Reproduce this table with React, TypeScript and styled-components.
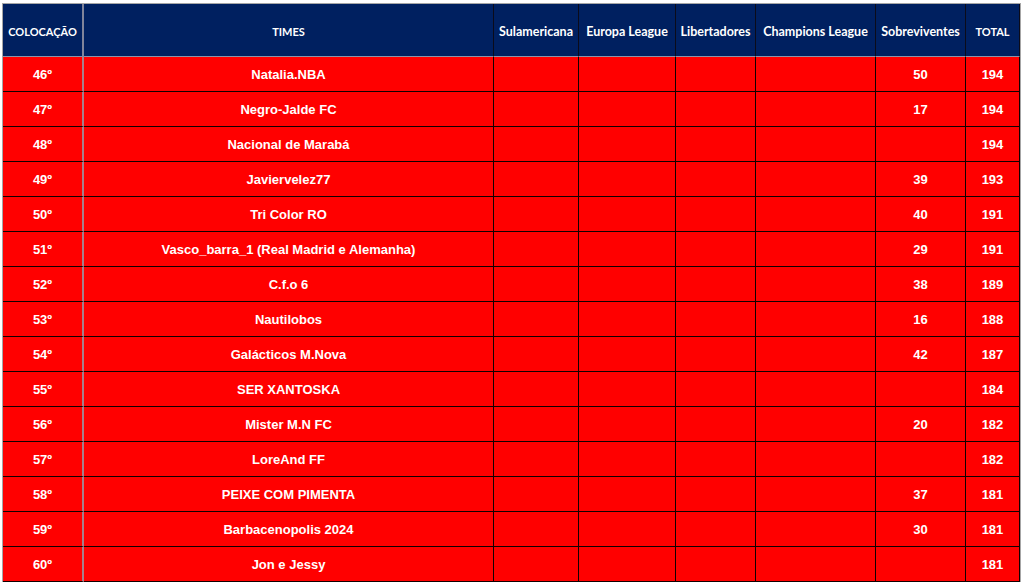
import React from 'react'
import styled, { createGlobalStyle } from 'styled-components'

const GlobalStyle = createGlobalStyle`
  html, body {
    margin: 0;
    padding: 0;
    background: #ffffff;
  }
`

const Sheet = styled.div`
  padding: 3px 0 0 2px;
  width: 1023px;
  height: 584px;
  box-sizing: border-box;
  overflow: hidden;
`

const Grid = styled.div`
  display: grid;
  grid-template-columns: 81px 410px 85px 97px 80px 120px 90px 54px;
  width: max-content;
  border-top: 1px solid #a6a6a6;
  border-left: 1px solid #a6a6a6;
  border-right: 1px solid #a6a6a6;
`

const HeadCell = styled.div<{ $grid?: boolean; $caps?: boolean }>`
  height: 53px;
  box-sizing: border-box;
  background: #002060;
  color: #ffffff;
  font-family: Lato, 'Open Sans', sans-serif;
  font-weight: 700;
  font-size: ${({ $caps }) => ($caps ? '11px' : '12.5px')};
  display: flex;
  align-items: center;
  justify-content: center;
  white-space: nowrap;
  padding-top: 2px;
  border-bottom: 1px solid #8c93a8;
  border-right: ${({ $grid }) => ($grid ? '2px solid rgba(150,150,165,0.85)' : '1px solid #0b0b1a')};
`

const Cell = styled.div<{ $grid?: boolean }>`
  height: 35px;
  box-sizing: border-box;
  background: #ff0000;
  color: #ffffff;
  font-family: 'Liberation Sans', Arial, sans-serif;
  font-weight: 700;
  font-size: 13px;
  display: flex;
  align-items: center;
  justify-content: center;
  white-space: nowrap;
  padding-top: 1px;
  border-bottom: 1px solid #120000;
  border-right: ${({ $grid }) => ($grid ? '2px solid rgba(150,150,165,0.85)' : '1px solid #120000')};
`

const columns = [
  'COLOCAÇÃO',
  'TIMES',
  'Sulamericana',
  'Europa League',
  'Libertadores',
  'Champions League',
  'Sobreviventes',
  'TOTAL',
]

type Row = { pos: number; team: string; sobr?: number; total: number }

const rows: Row[] = [
  { pos: 46, team: 'Natalia.NBA', sobr: 50, total: 194 },
  { pos: 47, team: 'Negro-Jalde FC', sobr: 17, total: 194 },
  { pos: 48, team: 'Nacional de Marabá', total: 194 },
  { pos: 49, team: 'Javiervelez77', sobr: 39, total: 193 },
  { pos: 50, team: 'Tri Color RO', sobr: 40, total: 191 },
  { pos: 51, team: 'Vasco_barra_1 (Real Madrid e Alemanha)', sobr: 29, total: 191 },
  { pos: 52, team: 'C.f.o 6', sobr: 38, total: 189 },
  { pos: 53, team: 'Nautilobos', sobr: 16, total: 188 },
  { pos: 54, team: 'Galácticos M.Nova', sobr: 42, total: 187 },
  { pos: 55, team: 'SER XANTOSKA', total: 184 },
  { pos: 56, team: 'Mister M.N FC', sobr: 20, total: 182 },
  { pos: 57, team: 'LoreAnd FF', total: 182 },
  { pos: 58, team: 'PEIXE COM PIMENTA', sobr: 37, total: 181 },
  { pos: 59, team: 'Barbacenopolis 2024', sobr: 30, total: 181 },
  { pos: 60, team: 'Jon e Jessy', total: 181 },
]

const App = () => {
  return (
    <>
      <GlobalStyle />
      <Sheet>
        <Grid>
          {columns.map((c, i) => (
            <HeadCell key={c} $grid={i === 0} $caps={c === c.toUpperCase()}>
              {c}
            </HeadCell>
          ))}
          {rows.map((r) => (
            <React.Fragment key={r.pos}>
              <Cell $grid>{r.pos}º</Cell>
              <Cell>{r.team}</Cell>
              <Cell />
              <Cell />
              <Cell />
              <Cell />
              <Cell>{r.sobr ?? ''}</Cell>
              <Cell>{r.total}</Cell>
            </React.Fragment>
          ))}
        </Grid>
      </Sheet>
    </>
  )
}

export default App
